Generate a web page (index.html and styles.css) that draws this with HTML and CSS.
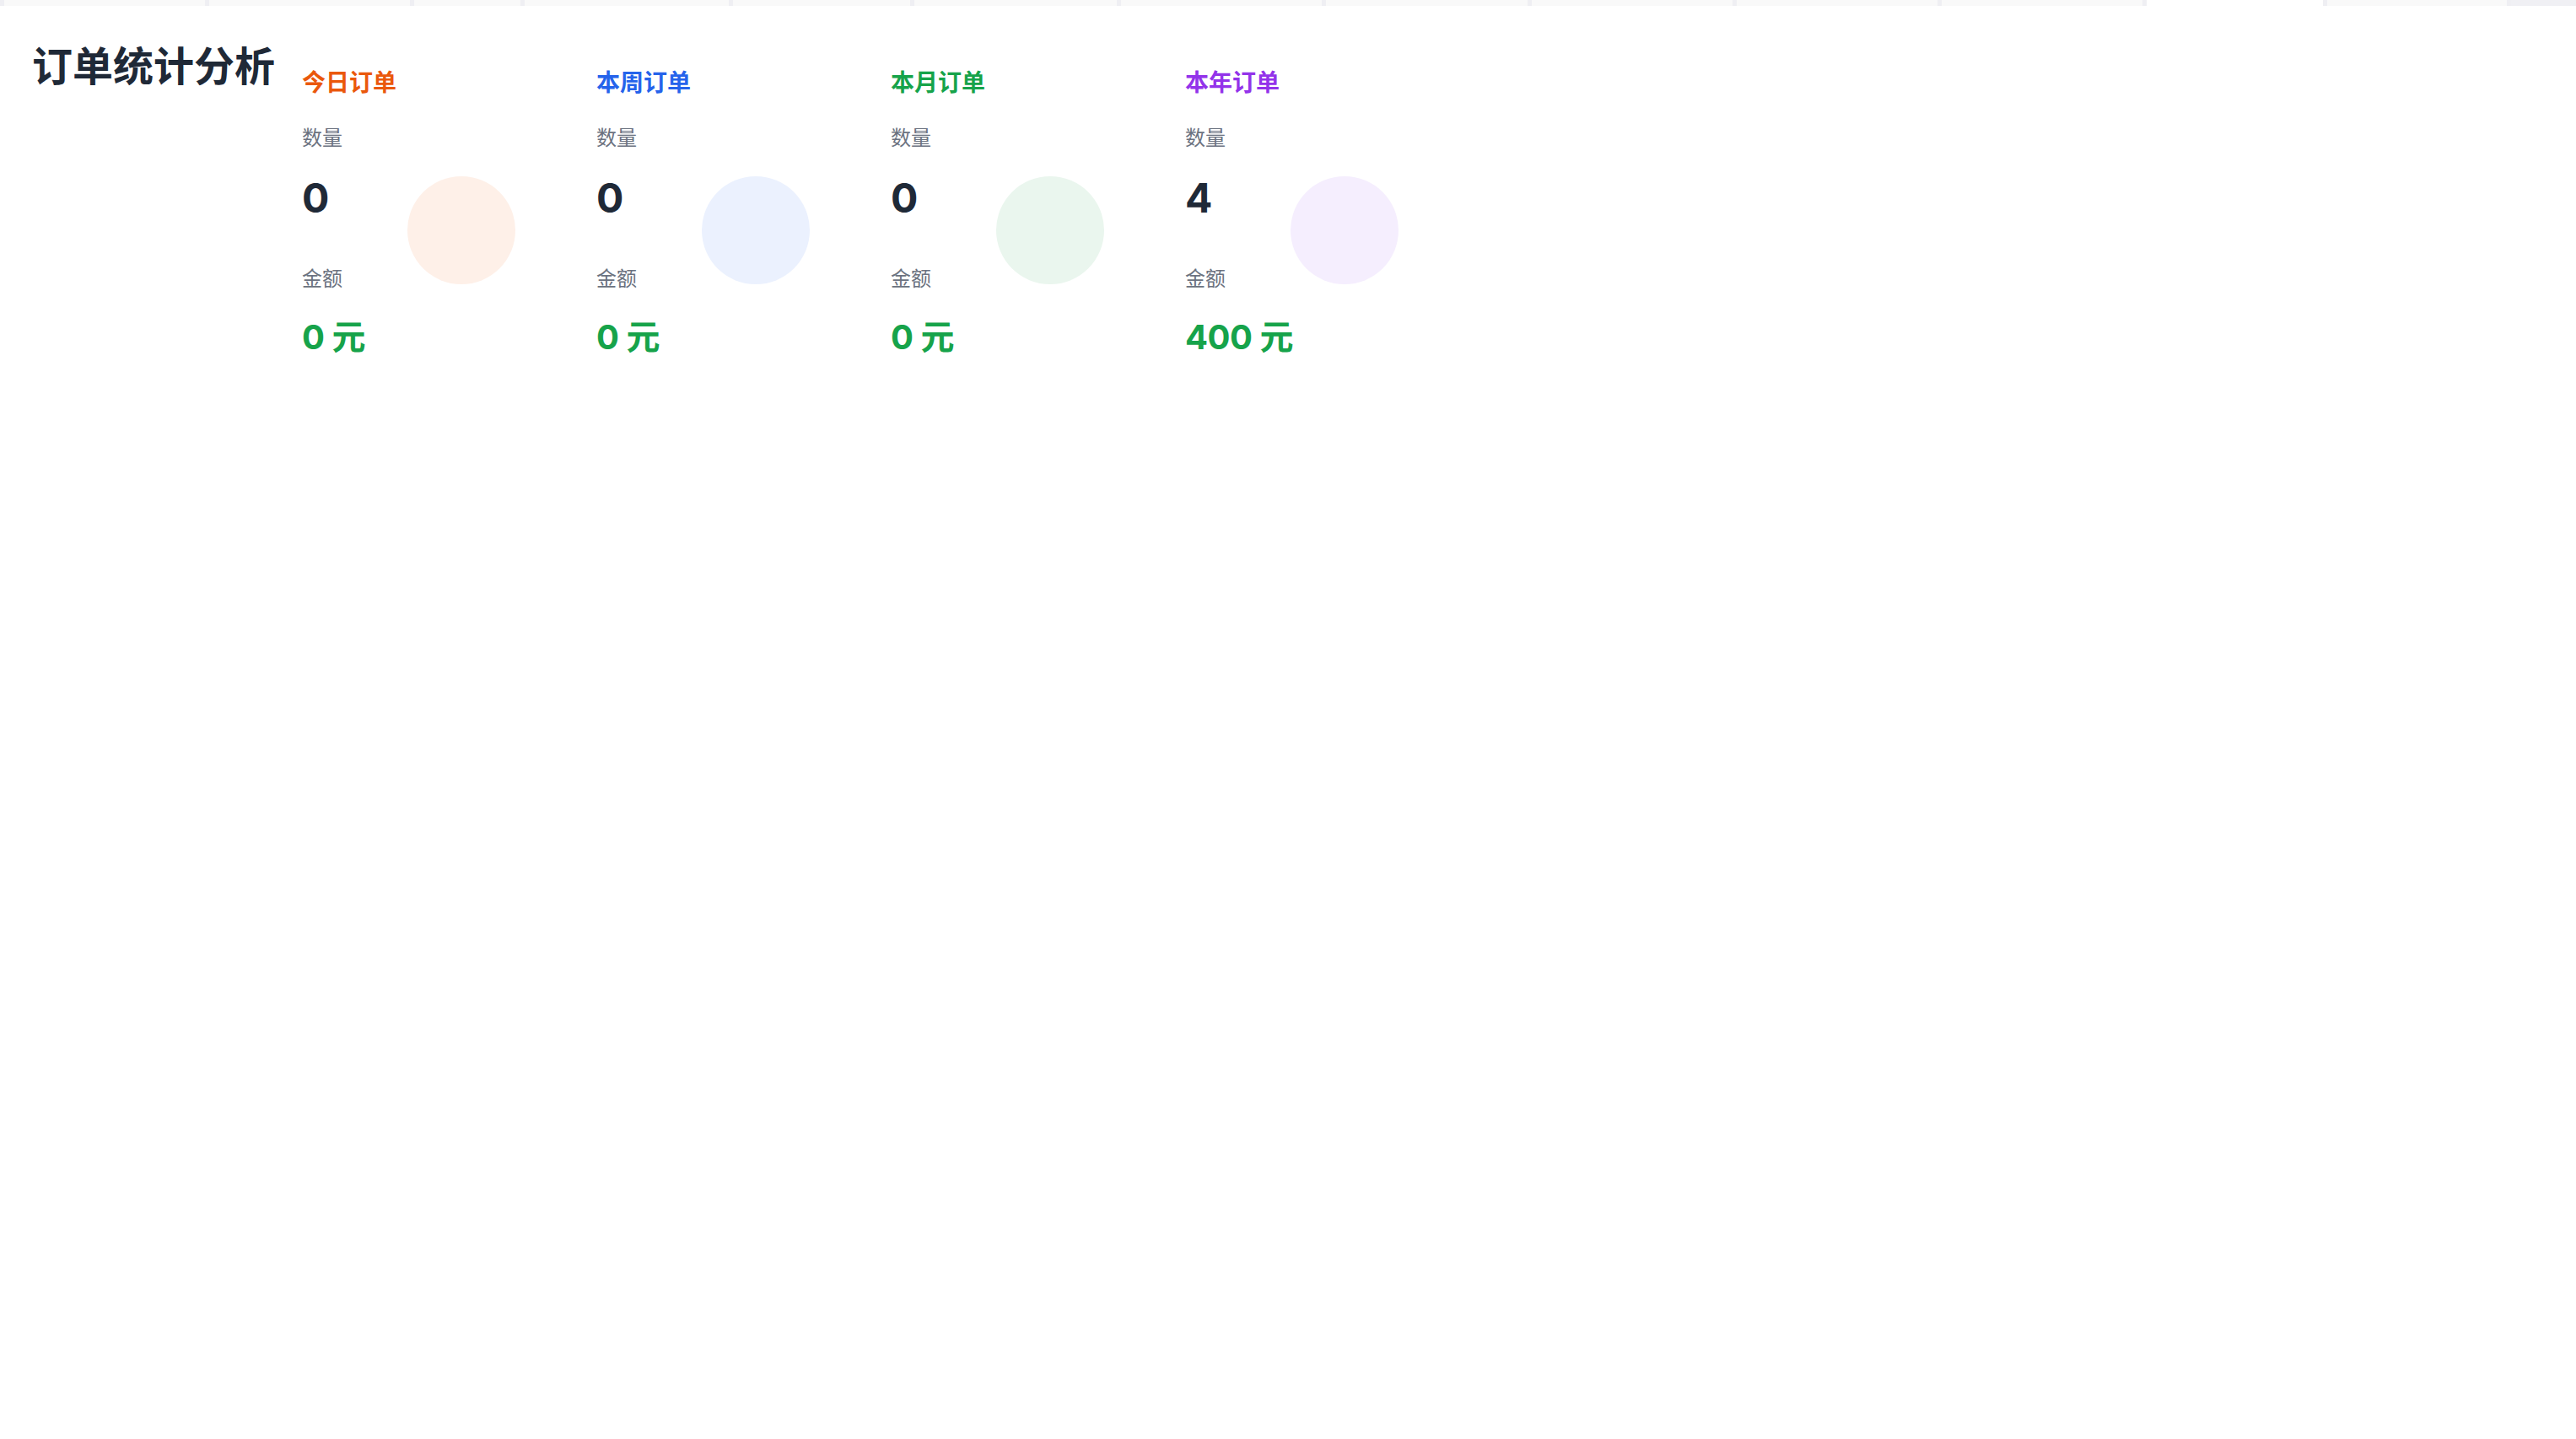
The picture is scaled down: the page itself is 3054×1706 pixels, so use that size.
FILE: index.html
```html
<!DOCTYPE html>
<html lang="zh-CN">
<head>
    <meta charset="UTF-8">
    <meta name="viewport" content="width=device-width, initial-scale=1.0">
    <title>订单统计分析</title>
    <link rel="stylesheet" href="styles.css">
</head>
<body>
    <div class="tab-strip">
        <span class="seg" style="width: 243px"></span>
        <span class="seg" style="width: 243px"></span>
        <span class="seg" style="width: 131px"></span>
        <span class="seg" style="width: 247px"></span>
        <span class="seg" style="width: 215px"></span>
        <span class="seg" style="width: 245px"></span>
        <span class="seg" style="width: 243px"></span>
        <span class="seg" style="width: 244px"></span>
        <span class="seg" style="width: 243px"></span>
        <span class="seg" style="width: 243px"></span>
        <span class="seg" style="width: 243px"></span>
        <span class="seg blank" style="width: 214px"></span>
        <span class="seg" style="width: 218px"></span>
        <span class="seg dark"></span>
    </div>

    <div class="container">
        <h1>订单统计分析</h1>

        <div class="stats">
            <div class="stat-card orange">
                <h2>今日订单</h2>
                <div class="stat-body">
                    <div class="stat-text">
                        <p class="label">数量</p>
                        <p class="count">0</p>
                        <p class="label label-amount">金额</p>
                        <p class="amount">0 元</p>
                    </div>
                    <div class="circle"></div>
                </div>
            </div>
            <div class="stat-card blue">
                <h2>本周订单</h2>
                <div class="stat-body">
                    <div class="stat-text">
                        <p class="label">数量</p>
                        <p class="count">0</p>
                        <p class="label label-amount">金额</p>
                        <p class="amount">0 元</p>
                    </div>
                    <div class="circle"></div>
                </div>
            </div>
            <div class="stat-card green">
                <h2>本月订单</h2>
                <div class="stat-body">
                    <div class="stat-text">
                        <p class="label">数量</p>
                        <p class="count">0</p>
                        <p class="label label-amount">金额</p>
                        <p class="amount">0 元</p>
                    </div>
                    <div class="circle"></div>
                </div>
            </div>
            <div class="stat-card purple">
                <h2>本年订单</h2>
                <div class="stat-body">
                    <div class="stat-text">
                        <p class="label">数量</p>
                        <p class="count">4</p>
                        <p class="label label-amount">金额</p>
                        <p class="amount">400 元</p>
                    </div>
                    <div class="circle"></div>
                </div>
            </div>
        </div>
    </div>
</body>
</html>
```

FILE: styles.css
```css
* {
    margin: 0;
    padding: 0;
    box-sizing: border-box;
}

body {
    font-family: Inter, "Noto Sans CJK SC", sans-serif;
    background-color: #fff;
    color: #1f2937;
}

.tab-strip {
    display: flex;
    height: 7px;
    overflow: hidden;
}

.tab-strip .seg {
    flex-shrink: 0;
    background-color: #f9f9f9;
    border-left: 5px solid #efeff3;
}

.tab-strip .seg.blank {
    background-color: #fff;
}

.tab-strip .seg.dark {
    flex: 1;
    background-color: #f0f0f4;
}

.container {
    display: flex;
    align-items: flex-start;
    gap: 32px;
    padding: 40px 38px;
}

h1 {
    font-size: 48px;
    line-height: 64px;
    font-weight: 700;
    color: #1f2937;
    white-space: nowrap;
}

.stats {
    display: flex;
    gap: 96px;
    margin-top: 31px;
}

.stat-card {
    width: 253px;
}

.stat-card h2 {
    font-size: 28px;
    line-height: 40px;
    font-weight: 600;
    margin-bottom: 30px;
}

.stat-card.orange h2 { color: #ea580c; }
.stat-card.blue h2 { color: #2563eb; }
.stat-card.green h2 { color: #16a34a; }
.stat-card.purple h2 { color: #9333ea; }

.stat-body {
    display: flex;
    align-items: flex-start;
}

.stat-text {
    width: 125px;
    flex-shrink: 0;
}

.label {
    font-size: 24px;
    line-height: 32px;
    color: #6b7280;
}

.count {
    font-size: 48px;
    line-height: 64px;
    font-weight: 700;
    color: #1f2937;
    margin-top: 23px;
}

.label-amount {
    margin-top: 48px;
}

.amount {
    font-size: 40px;
    line-height: 56px;
    font-weight: 700;
    color: #16a34a;
    margin-top: 25px;
    white-space: nowrap;
    letter-spacing: -0.5px;
}

.circle {
    width: 128px;
    height: 128px;
    border-radius: 50%;
    margin-top: 61px;
    flex-shrink: 0;
}

.orange .circle { background-color: #fef0e8; }
.blue .circle { background-color: #ebf1fe; }
.green .circle { background-color: #eaf6ee; }
.purple .circle { background-color: #f5eefe; }
```
